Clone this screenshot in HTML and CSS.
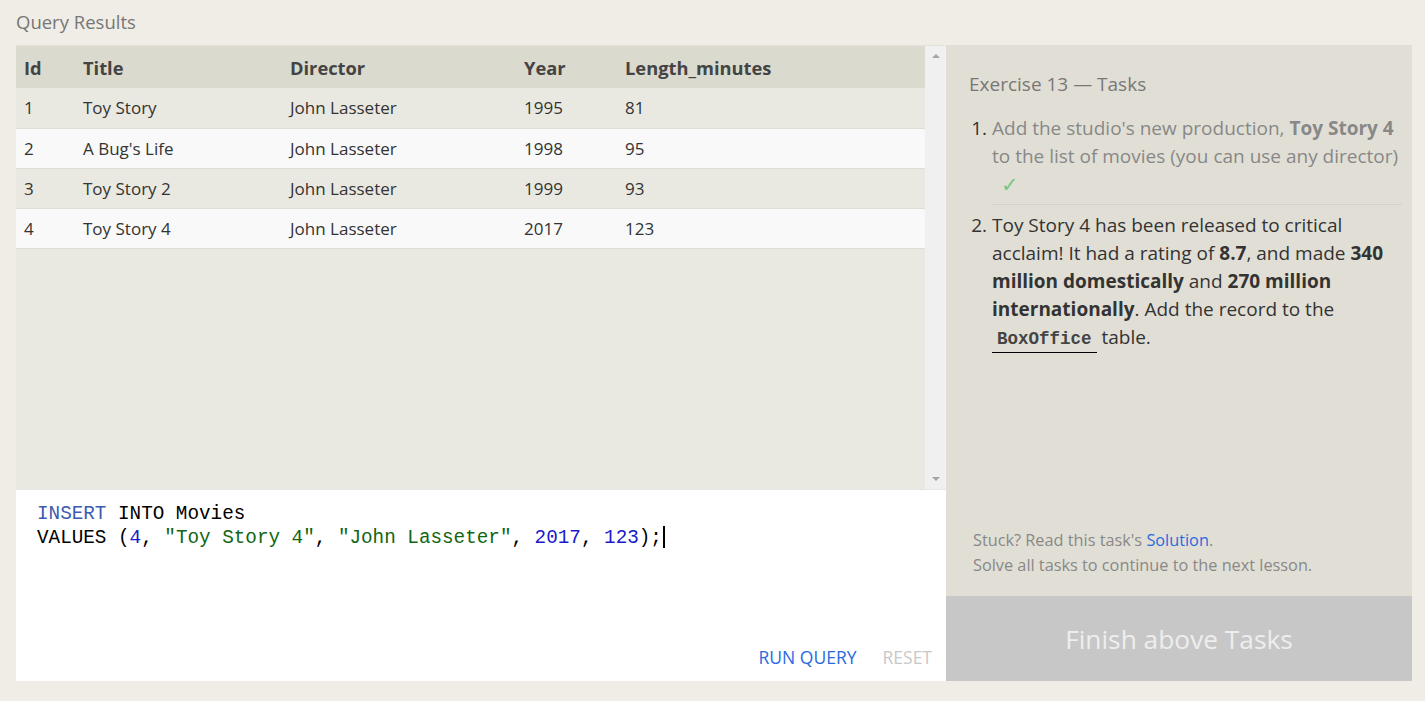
FILE: index.html
```html
<!DOCTYPE html>
<html>
<head>
<meta charset="utf-8">
<link rel="stylesheet" href="styles.css">
</head>
<body>
<div class="page">
  <h2 class="title">Query Results</h2>
  <div class="workspace">
    <div class="left">
      <div class="results">
        <div class="table-wrap">
          <table class="grid">
            <thead>
              <tr><th class="c-id">Id</th><th class="c-title">Title</th><th class="c-dir">Director</th><th class="c-year">Year</th><th>Length_minutes</th></tr>
            </thead>
            <tbody>
              <tr><td>1</td><td>Toy Story</td><td>John Lasseter</td><td>1995</td><td>81</td></tr>
              <tr><td>2</td><td>A Bug's Life</td><td>John Lasseter</td><td>1998</td><td>95</td></tr>
              <tr><td>3</td><td>Toy Story 2</td><td>John Lasseter</td><td>1999</td><td>93</td></tr>
              <tr><td>4</td><td>Toy Story 4</td><td>John Lasseter</td><td>2017</td><td>123</td></tr>
            </tbody>
          </table>
        </div>
        <div class="scrollbar">
          <span class="arrow up"></span>
          <span class="arrow down"></span>
        </div>
      </div>
      <div class="editor">
        <div class="code">
          <div class="line"><span class="kw">INSERT</span><span> INTO Movies</span></div>
          <div class="line"><span>VALUES (</span><span class="num">4</span><span>, </span><span class="str">"Toy Story 4"</span><span>, </span><span class="str">"John Lasseter"</span><span>, </span><span class="num">2017</span><span>, </span><span class="num">123</span><span>);</span><span class="caret"></span></div>
        </div>
        <div class="actions">
          <span class="btn run">RUN QUERY</span>
          <span class="btn reset">RESET</span>
        </div>
      </div>
    </div>
    <div class="right">
      <div class="tasks">
        <h3 class="tasks-title">Exercise 13 — Tasks</h3>
        <ol class="task-list">
          <li class="task done"><span>Add the studio's new production, </span><b>Toy Story 4</b> <span>to the list of movies (you can use any director)</span><span class="check">✓</span></li>
          <li class="task"><span>Toy Story 4 has been released to critical</span> <span>acclaim! It had a rating of </span><b>8.7</b><span>, and made </span><b>340</b> <b>million domestically</b><span> and </span><b>270 million</b> <b>internationally</b><span>. Add the record to the</span> <code class="tbl">BoxOffice</code><span> table.</span></li>
        </ol>
      </div>
      <div class="help">
        <p>Stuck? Read this task's <a class="link">Solution</a>.</p>
        <p>Solve all tasks to continue to the next lesson.</p>
      </div>
      <div class="finish">Finish above Tasks</div>
    </div>
  </div>
</div>
</body>
</html>
```
FILE: styles.css
```css
* { box-sizing: border-box; }
html, body { margin: 0; padding: 0; }
body {
  background: #efede6;
  font-family: "Open Sans", "Noto Sans", sans-serif;
  color: #333;
}
.page {
  width: 1425px;
  height: 701px;
  padding: 0 13px 20px 16px;
  display: flex;
  flex-direction: column;
}
.title {
  margin: 0;
  height: 45px;
  padding-top: 9px;
  font-size: 18.5px;
  line-height: 26px;
  font-weight: normal;
  color: #777;
}
.workspace {
  display: flex;
  height: 636px;
}
.left {
  width: 930px;
  display: flex;
  flex-direction: column;
}
.results {
  height: 444px;
  display: flex;
  background: #eae9e1;
  border-top: 1px solid #e4e2d8;
}
.table-wrap {
  flex: 1;
}
.grid {
  width: 100%;
  border-collapse: collapse;
  font-size: 17px;
}
.grid th {
  background: #dbdace;
  text-align: left;
  font-weight: bold;
  font-size: 18.3px;
  color: #444;
  height: 42px;
  padding: 1px 0 0 8px;
}
.grid td {
  height: 40px;
  padding: 0 0 0 8px;
  border-bottom: 1px solid #dfded6;
  color: #333;
}
.grid tbody tr:nth-child(odd) td { background: #eae9e1; }
.grid tbody tr:nth-child(even) td { background: #f9f9f9; }
.c-id { width: 59px; }
.c-title { width: 207px; }
.c-dir { width: 234px; }
.c-year { width: 101px; }
.scrollbar {
  width: 21px;
  background: #f0f0f0;
  display: flex;
  flex-direction: column;
  justify-content: space-between;
  align-items: center;
  padding: 8px 0 8px;
}
.arrow {
  width: 0;
  height: 0;
  border-left: 4px solid transparent;
  border-right: 4px solid transparent;
}
.arrow.up { border-bottom: 4px solid #a3a3a3; }
.arrow.down { border-top: 4px solid #a3a3a3; }
.editor {
  flex: 1;
  background: #fff;
  border-top: 1px solid #e6e6e6;
  display: flex;
  flex-direction: column;
  justify-content: space-between;
}
.code {
  padding: 12px 0 0 21px;
  font-family: "Liberation Mono", "DejaVu Sans Mono", monospace;
  font-size: 19.3px;
  line-height: 24px;
  color: #000;
}
.line {
  height: 24px;
  white-space: pre;
}
.kw { color: #3b5bb0; }
.num { color: #1a1acc; }
.str { color: #116611; }
.caret {
  display: inline-block;
  width: 2px;
  height: 22px;
  background: #000;
  vertical-align: -5px;
  margin-left: 1px;
}
.actions {
  display: flex;
  justify-content: flex-end;
  gap: 26px;
  padding: 0 14px 12px 0;
  font-size: 17.5px;
  line-height: 24px;
}
.run { color: #2a6ae0; }
.reset { color: #c8c8c8; }
.right {
  width: 466px;
  background: #e1dfd5;
  display: flex;
  flex-direction: column;
}
.tasks {
  flex: 1;
  padding: 26px 10px 0 23px;
}
.tasks-title {
  margin: 0 0 17px;
  font-size: 19px;
  line-height: 26px;
  font-weight: normal;
  color: #777;
}
.task-list {
  margin: 0;
  padding: 0 0 0 23px;
  font-size: 19px;
  line-height: 28px;
}
.task::marker { color: #333; }
.task.done {
  color: #888;
  border-bottom: 1px solid #d4d2c8;
  padding-bottom: 6px;
  margin-bottom: 6px;
}
.task b { font-weight: bold; }
.check {
  display: block;
  color: #74c784;
  padding-left: 9px;
  font-size: 21px;
  line-height: 28px;
}
.tbl {
  font-family: "Liberation Mono", "DejaVu Sans Mono", monospace;
  font-weight: bold;
  font-size: 17.5px;
  color: #444;
  padding: 0 5px 3px;
  border-bottom: 1px solid #000;
}
.help {
  padding: 0 0 18px 27px;
  font-size: 16.3px;
  line-height: 25px;
  color: #888;
}
.help p { margin: 0; }
.link { color: #2a6ae0; }
.finish {
  height: 85px;
  background: #c7c7c7;
  color: #eeeeee;
  font-size: 26.3px;
  display: flex;
  align-items: center;
  justify-content: center;
}
```
